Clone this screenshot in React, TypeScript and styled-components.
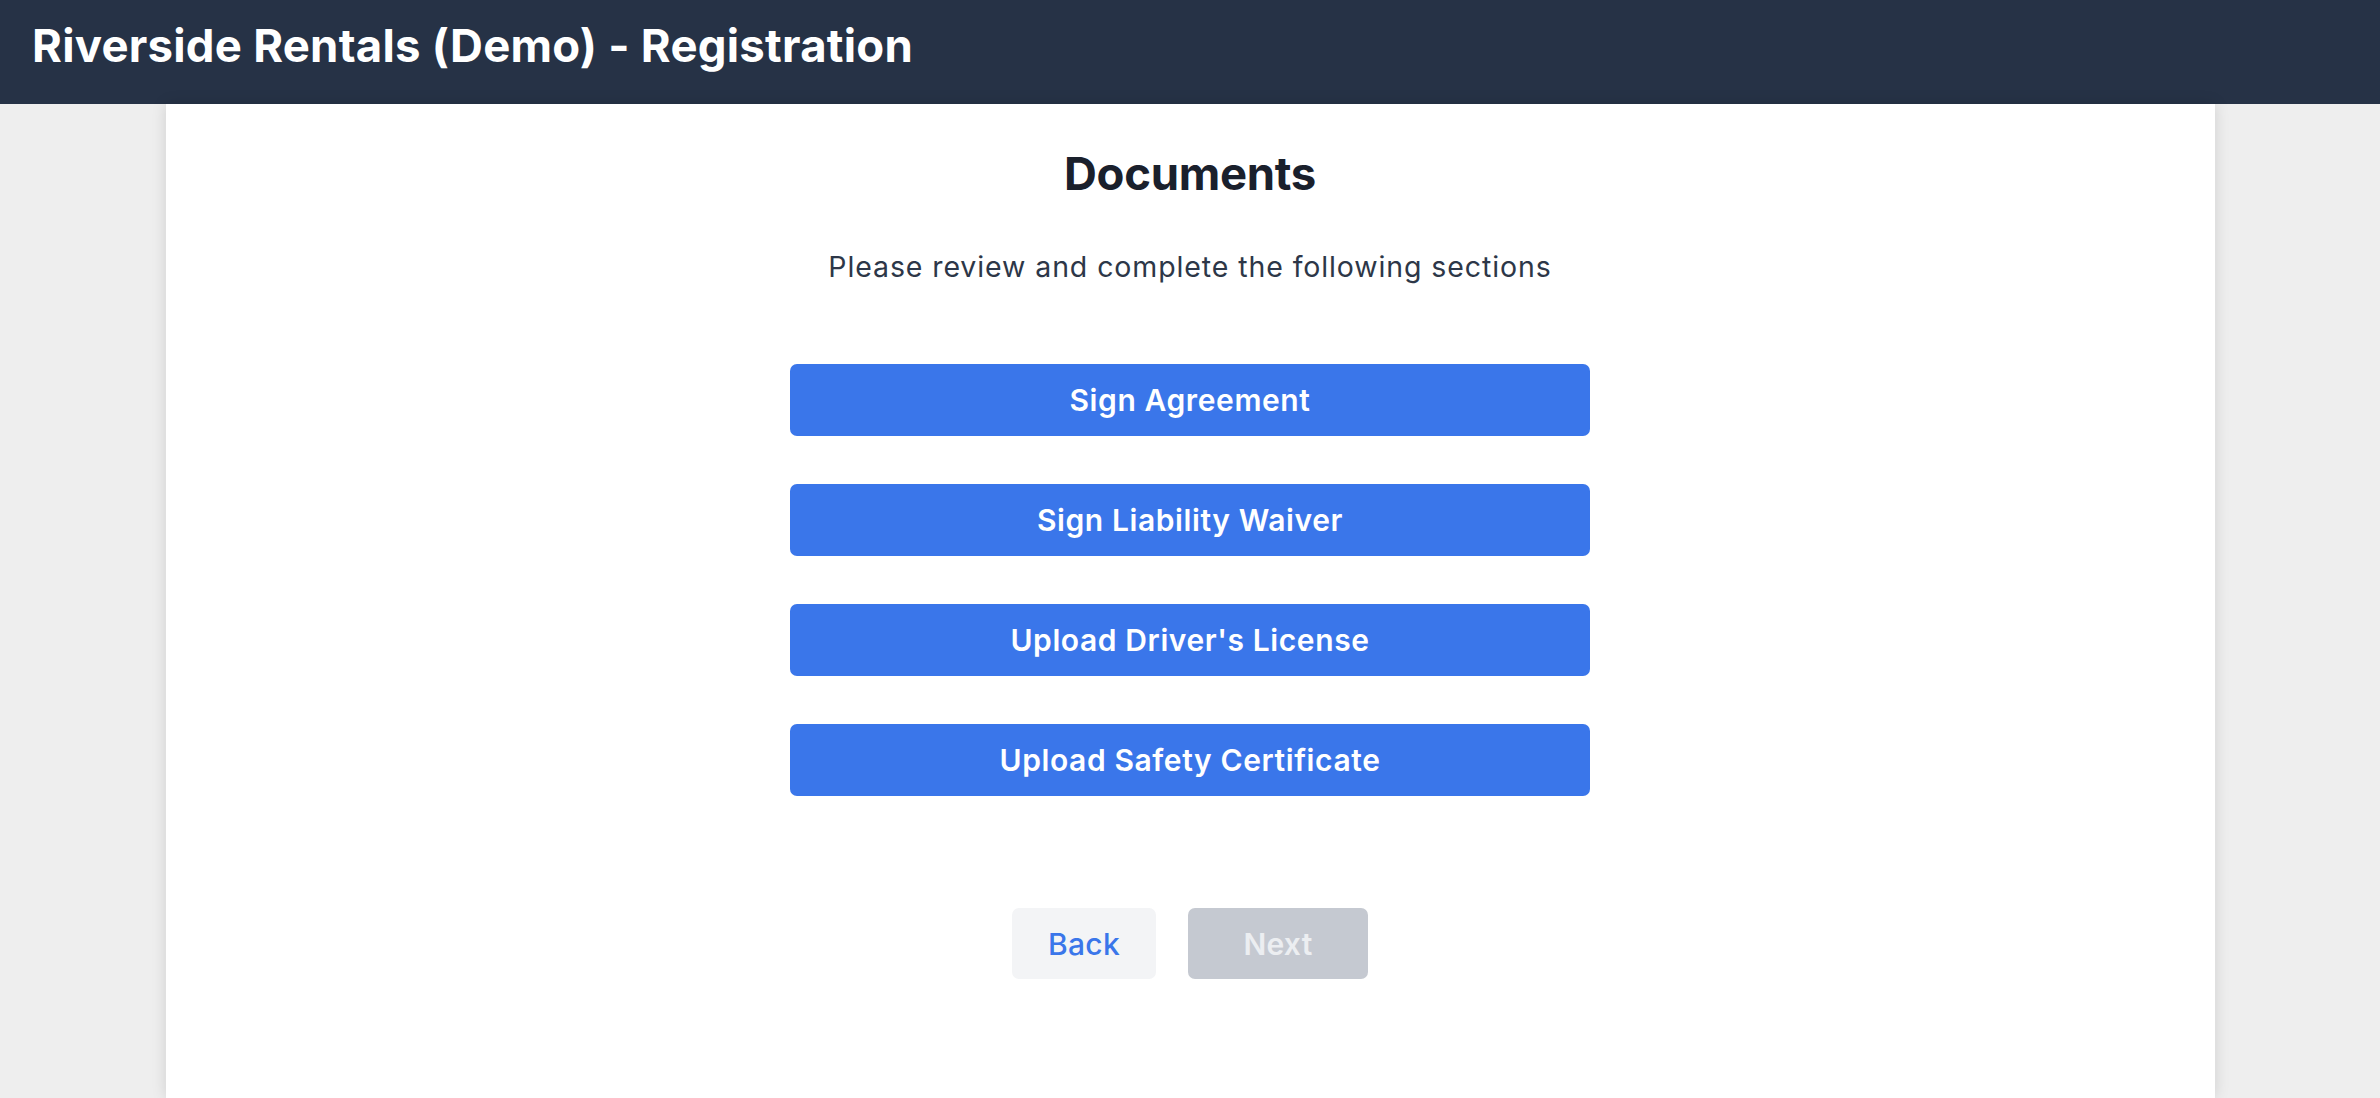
import React from "react";
import styled, { createGlobalStyle } from "styled-components";

const GlobalStyle = createGlobalStyle`
  html, body {
    margin: 0;
    padding: 0;
    background: #eeeeee;
    font-family: Inter, "Noto Sans", "Liberation Sans", sans-serif;
  }
  * { box-sizing: border-box; }
`;

const Page = styled.div`
  display: flex;
  flex-direction: column;
  min-height: 100vh;
`;

const Header = styled.header`
  height: 104px;
  background: #263246;
  padding: 18px 32px 0;
`;

const HeaderTitle = styled.h1`
  margin: 0;
  color: #ffffff;
  font-size: 45.5px;
  line-height: 55px;
  font-weight: 700;
  letter-spacing: 0.25px;
`;

const Card = styled.main`
  flex: 1;
  width: 2049px;
  margin: 0 auto;
  background: #ffffff;
  box-shadow: 0 0 14px rgba(0, 0, 0, 0.13);
  padding-top: 42px;
  display: flex;
  flex-direction: column;
  align-items: center;
`;

const Heading = styled.h2`
  margin: 0;
  color: #1a202c;
  font-size: 45.5px;
  line-height: 56px;
  font-weight: 700;
  letter-spacing: -0.3px;
`;

const Subtitle = styled.p`
  margin: 45px 0 0;
  color: #2d3748;
  font-size: 28.5px;
  line-height: 40px;
  font-weight: 400;
  letter-spacing: 0.9px;
`;

const SectionList = styled.div`
  margin-top: 77px;
  display: flex;
  flex-direction: column;
  gap: 48px;
  width: 800px;
`;

const SectionButton = styled.button`
  height: 72px;
  width: 100%;
  border: none;
  border-radius: 7px;
  background: #3a76ea;
  color: #ffffff;
  font-family: inherit;
  font-size: 30px;
  font-weight: 600;
  letter-spacing: 0.6px;
  display: flex;
  align-items: center;
  justify-content: center;
  cursor: pointer;
`;

const NavRow = styled.div`
  margin-top: 112px;
  display: flex;
  gap: 32px;
  justify-content: center;
`;

const NavButton = styled.button<{ $variant: "back" | "next" }>`
  height: 71px;
  width: ${(p) => (p.$variant === "back" ? "144px" : "180px")};
  border: none;
  border-radius: 7px;
  font-family: inherit;
  font-size: 30px;
  letter-spacing: 0.3px;
  display: flex;
  align-items: center;
  justify-content: center;
  background: ${(p) => (p.$variant === "back" ? "#f3f4f6" : "#c5c9d1")};
  color: ${(p) => (p.$variant === "back" ? "#3a76ea" : "#eceef1")};
  font-weight: ${(p) => (p.$variant === "back" ? 500 : 600)};
  cursor: ${(p) => (p.$variant === "back" ? "pointer" : "not-allowed")};
`;

const sections = [
  "Sign Agreement",
  "Sign Liability Waiver",
  "Upload Driver's License",
  "Upload Safety Certificate",
];

export default function App() {
  return (
    <>
      <GlobalStyle />
      <Page>
        <Header>
          <HeaderTitle>Riverside Rentals (Demo) - Registration</HeaderTitle>
        </Header>
        <Card>
          <Heading>Documents</Heading>
          <Subtitle>Please review and complete the following sections</Subtitle>
          <SectionList>
            {sections.map((s) => (
              <SectionButton key={s}>{s}</SectionButton>
            ))}
          </SectionList>
          <NavRow>
            <NavButton $variant="back">Back</NavButton>
            <NavButton $variant="next" disabled>
              Next
            </NavButton>
          </NavRow>
        </Card>
      </Page>
    </>
  );
}
